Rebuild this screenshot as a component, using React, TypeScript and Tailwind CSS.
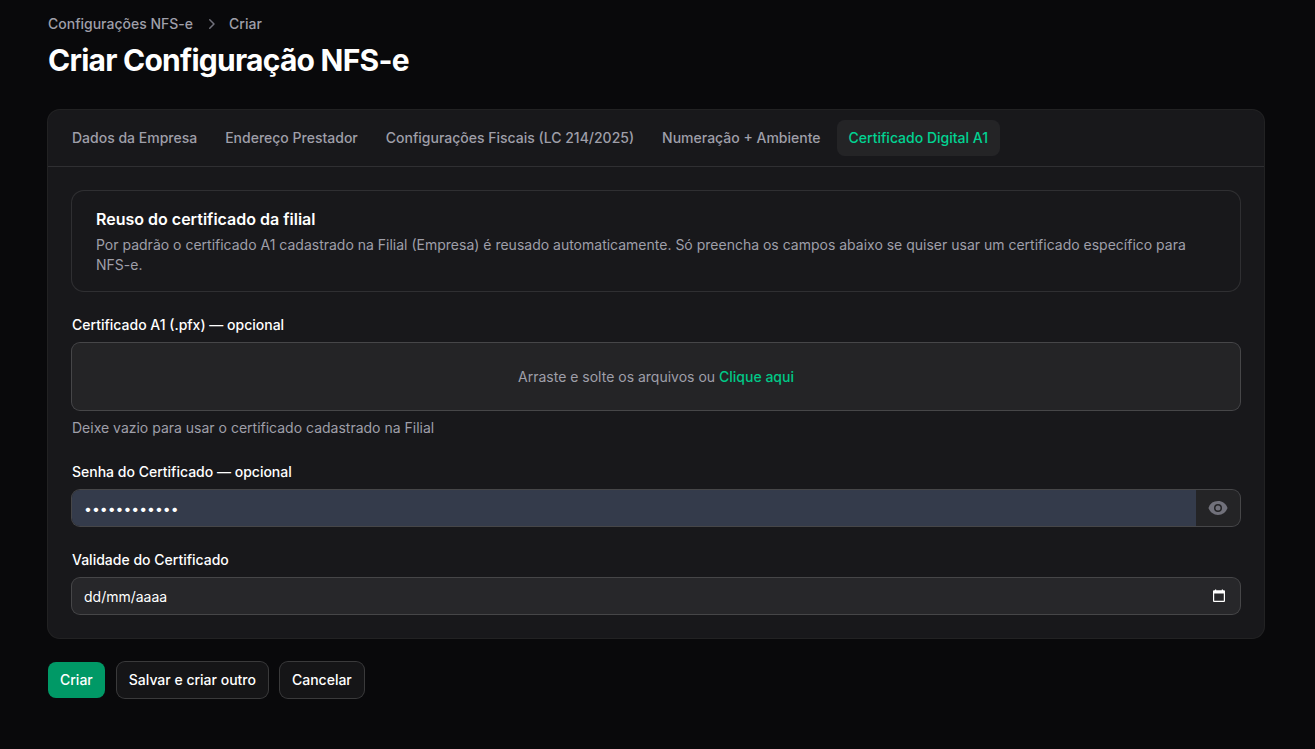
import { useState } from 'react';
import type { ReactNode } from 'react';
import clsx from 'clsx';

const tabs = [
  'Dados da Empresa',
  'Endereço Prestador',
  'Configurações Fiscais (LC 214/2025)',
  'Numeração + Ambiente',
  'Certificado Digital A1',
];

function ChevronIcon() {
  return (
    <svg viewBox="0 0 20 20" fill="currentColor" className="size-5 text-zinc-500" aria-hidden="true">
      <path
        fillRule="evenodd"
        clipRule="evenodd"
        d="M8.22 5.22a.75.75 0 0 1 1.06 0l4.25 4.25a.75.75 0 0 1 0 1.06l-4.25 4.25a.75.75 0 0 1-1.06-1.06L11.94 10 8.22 6.28a.75.75 0 0 1 0-1.06Z"
      />
    </svg>
  );
}

function EyeIcon() {
  return (
    <svg viewBox="0 0 20 20" fill="currentColor" className="size-5" aria-hidden="true">
      <path d="M10 12.5a2.5 2.5 0 1 0 0-5 2.5 2.5 0 0 0 0 5Z" />
      <path
        fillRule="evenodd"
        clipRule="evenodd"
        d="M.664 10.59a1.651 1.651 0 0 1 0-1.186A10.004 10.004 0 0 1 10 3c4.257 0 7.893 2.66 9.336 6.41.147.381.146.804 0 1.186A10.004 10.004 0 0 1 10 17c-4.257 0-7.893-2.66-9.336-6.41ZM14 10a4 4 0 1 1-8 0 4 4 0 0 1 8 0Z"
      />
    </svg>
  );
}

function CalendarIcon() {
  return (
    <svg viewBox="0 0 14 14" fill="currentColor" className="size-3.5" aria-hidden="true">
      <path
        fillRule="evenodd"
        d="M3 0.5h1.2V1.3h5.6V0.5H11V1.3h1a1 1 0 0 1 1 1v9.7a1 1 0 0 1-1 1H2a1 1 0 0 1-1-1V2.3a1 1 0 0 1 1-1h1V0.5ZM2.2 4.6v7.2h9.6V4.6H2.2Z"
      />
    </svg>
  );
}

interface FieldProps {
  id: string;
  label: string;
  hint?: string;
  children: ReactNode;
}

function Field({ id, label, hint, children }: FieldProps) {
  return (
    <div className="flex flex-col gap-2">
      <label htmlFor={id} className="self-start text-sm font-medium text-white">
        {label}
      </label>
      {children}
      {hint && <p className="text-sm text-zinc-400">{hint}</p>}
    </div>
  );
}

export default function App() {
  const [activeTab, setActiveTab] = useState('Certificado Digital A1');
  const [showPassword, setShowPassword] = useState(false);
  const [password, setPassword] = useState('certificado1');
  const [expiry, setExpiry] = useState('');

  return (
    <main className="min-h-screen bg-zinc-950 pt-3.5 pr-[51px] pb-12 pl-12 font-['Inter',sans-serif] text-white">
      <header>
        <nav aria-label="Breadcrumb">
          <ol className="flex items-center gap-2 text-sm font-medium text-zinc-400">
            <li>
              <a href="#configuracoes">Configurações NFS-e</a>
            </li>
            <li className="flex items-center gap-2">
              <ChevronIcon />
              <a href="#criar">Criar</a>
            </li>
          </ol>
        </nav>
        <h1 className="mt-2 text-3xl font-bold tracking-tight">Criar Configuração NFS-e</h1>
      </header>

      <form className="mt-8 flex flex-col gap-6" onSubmit={(e) => e.preventDefault()}>
        <div className="rounded-xl bg-zinc-900 ring-1 ring-white/10">
          {/* Tabs */}
          <div role="tablist" className="flex flex-wrap gap-1 border-b border-white/10 px-3 py-2.5">
            {tabs.map((tab) => (
              <button
                key={tab}
                type="button"
                role="tab"
                aria-selected={tab === activeTab}
                onClick={() => setActiveTab(tab)}
                className={clsx(
                  'rounded-lg px-3 py-2 text-sm font-medium',
                  tab === activeTab ? 'bg-white/5 text-emerald-400' : 'text-zinc-400 hover:bg-white/5',
                )}
              >
                {tab}
              </button>
            ))}
          </div>

          <div role="tabpanel" aria-label={activeTab} className="flex flex-col gap-6 p-6">
            <section className="rounded-xl px-6 py-4 ring-1 ring-white/10">
              <h2 className="text-base font-semibold">Reuso do certificado da filial</h2>
              <p className="mt-1 text-sm text-zinc-400">
                Por padrão o certificado A1 cadastrado na Filial (Empresa) é reusado automaticamente. Só preencha os
                campos abaixo se quiser usar um certificado específico para NFS-e.
              </p>
            </section>

            <Field
              id="certificado"
              label="Certificado A1 (.pfx) — opcional"
              hint="Deixe vazio para usar o certificado cadastrado na Filial"
            >
              <label
                htmlFor="certificado"
                className="relative flex h-[67px] cursor-pointer items-center justify-center rounded-lg bg-white/5 text-sm text-zinc-400 ring-1 ring-white/20"
              >
                <input id="certificado" type="file" accept=".pfx" className="sr-only" />
                <span>
                  Arraste e solte os arquivos ou <span className="font-medium text-[#00c887]">Clique aqui</span>
                </span>
              </label>
            </Field>

            <Field id="senha" label="Senha do Certificado — opcional">
              <div className="flex overflow-hidden rounded-lg bg-white/5 ring-1 ring-white/20">
                <input
                  id="senha"
                  type={showPassword ? 'text' : 'password'}
                  value={password}
                  onChange={(e) => setPassword(e.target.value)}
                  className="h-9 min-w-0 flex-1 bg-[#343b4b] px-3 text-sm outline-none"
                />
                <button
                  type="button"
                  aria-label="Mostrar senha"
                  onClick={() => setShowPassword(!showPassword)}
                  className="px-3 text-zinc-500"
                >
                  <EyeIcon />
                </button>
              </div>
            </Field>

            <Field id="validade" label="Validade do Certificado">
              <div className="flex items-center rounded-lg bg-zinc-800 ring-1 ring-white/20">
                <input
                  id="validade"
                  type="text"
                  placeholder="dd/mm/aaaa"
                  value={expiry}
                  onChange={(e) => setExpiry(e.target.value)}
                  className="h-9 min-w-0 flex-1 px-3 text-sm outline-none placeholder:text-white"
                />
                <button type="button" aria-label="Abrir calendário" className="pr-3.5 pl-3">
                  <CalendarIcon />
                </button>
              </div>
            </Field>
          </div>
        </div>

        {/* Actions */}
        <div className="flex flex-wrap items-center gap-3">
          <button type="submit" className="rounded-lg bg-emerald-600 px-3 py-2 text-sm font-medium">
            Criar
          </button>
          <button type="button" className="rounded-lg bg-white/5 px-3 py-2 text-sm font-medium ring-1 ring-white/20">
            Salvar e criar outro
          </button>
          <button type="button" className="rounded-lg bg-white/5 px-3 py-2 text-sm font-medium ring-1 ring-white/20">
            Cancelar
          </button>
        </div>
      </form>
    </main>
  );
}
